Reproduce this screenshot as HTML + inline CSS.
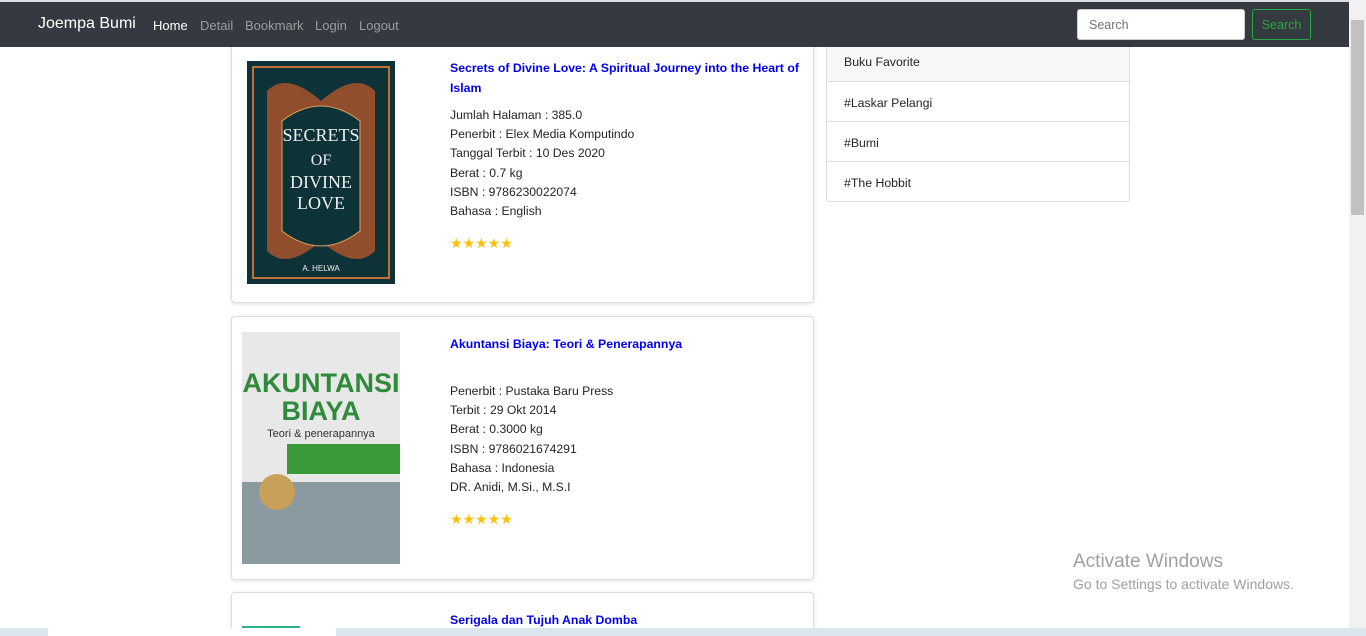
<!DOCTYPE html>
<html><head><style>
*{box-sizing:border-box;margin:0;padding:0}
html,body{width:1366px;height:636px;overflow:hidden}
body{background:#fff;font-family:"Liberation Sans",sans-serif;position:relative;font-size:13px;color:#212529}
.top{position:absolute;left:0;top:0;width:1366px;height:2px;background:#ddd;z-index:5}
nav{position:absolute;left:0;top:2px;width:1349px;height:45px;background:#343a40;z-index:5}
.brand{position:absolute;left:38px;top:13px;color:#fff;font-size:16px}
.nl{position:absolute;top:16px;font-size:13px;color:#9a9da0}
.srch{position:absolute;left:1077px;top:7px;width:168px;height:31px;background:#fff;border-radius:3px;border:1px solid #ccc;padding:8px 11px;color:#6c757d;font-size:12.5px}
.sbtn{position:absolute;left:1252px;top:7px;width:59px;height:31px;border:1px solid #28a745;border-radius:3px;color:#28a745;font-size:12.5px;padding:8px 0;text-align:center}
.card{position:absolute;left:231px;width:583px;border:1px solid #ddd;border-radius:4px;box-shadow:0 1px 4px rgba(0,0,0,.12);background:#fff}
.t{position:absolute;left:218px;color:#0000ee;font-weight:bold;font-size:12.3px;line-height:20px;width:350px}
.info{position:absolute;left:218px;line-height:19.2px;font-size:12.2px}
.stars{position:absolute;left:218px;color:#ffc107;font-size:14px;letter-spacing:0px}
.list{position:absolute;left:826px;top:40px;width:304px;border:1px solid #ddd;border-radius:0 0 4px 4px;font-size:12.3px}
.list div{height:40px;border-top:1px solid #ddd;padding:14px 17px 0}
.list div:first-child{background:#f7f7f7;border-top:none;height:40px;padding-top:14px}
.scroll{position:absolute;left:1349px;top:0;width:17px;height:628px;background:#f1f1f1;z-index:6}
.thumb{position:absolute;left:1351px;top:20px;width:13px;height:195px;background:#c1c1c1;z-index:7}
.task{position:absolute;left:0;top:628px;width:1366px;height:8px;background:#dbe6ee;z-index:8}
.wm{position:absolute;left:1073px;color:#a0a0a0;z-index:4}
</style></head><body>
<div class="top"></div>
<nav>
<div class="brand">Joempa Bumi</div>
<div class="nl" style="left:153px;color:#fff">Home</div>
<div class="nl" style="left:200px">Detail</div>
<div class="nl" style="left:245px">Bookmark</div>
<div class="nl" style="left:315px">Login</div>
<div class="nl" style="left:359px">Logout</div>
<div class="srch">Search</div>
<div class="sbtn">Search</div>
</nav>
<div class="card" style="top:36px;height:267px">
<svg style="position:absolute;left:15px;top:24px" width="148" height="223"><rect width="148" height="223" fill="#0d3338"/><rect x="6" y="6" width="136" height="211" fill="none" stroke="#c0703a" stroke-width="2"/><path d="M20 30 Q40 10 74 40 Q108 10 128 30 L128 190 Q108 210 74 180 Q40 210 20 190Z" fill="#c95a2a" opacity=".7"/><path d="M35 60 Q74 30 113 60 L113 170 Q74 200 35 170Z" fill="#0d3338" stroke="#e0a060"/><text x="74" y="80" fill="#eee" font-size="18" text-anchor="middle" font-family="Liberation Serif">SECRETS</text><text x="74" y="104" fill="#eee" font-size="16" text-anchor="middle" font-family="Liberation Serif">OF</text><text x="74" y="127" fill="#eee" font-size="18" text-anchor="middle" font-family="Liberation Serif">DIVINE</text><text x="74" y="148" fill="#eee" font-size="18" text-anchor="middle" font-family="Liberation Serif">LOVE</text><text x="74" y="210" fill="#eee" font-size="8" text-anchor="middle">A. HELWA</text></svg>
<div class="t" style="top:21px">Secrets of Divine Love: A Spiritual Journey into the Heart of Islam</div>
<div class="info" style="top:69px">Jumlah Halaman : 385.0<br>Penerbit : Elex Media Komputindo<br>Tanggal Terbit : 10 Des 2020<br>Berat : 0.7 kg<br>ISBN : 9786230022074<br>Bahasa : English</div>
<div class="stars" style="top:198px">★★★★★</div>
</div>
<div class="card" style="top:316px;height:264px">
<svg style="position:absolute;left:10px;top:15px" width="158" height="232"><rect width="158" height="232" fill="#e8e8e8"/><text x="79" y="60" fill="#2e8b3a" font-size="27" font-weight="bold" text-anchor="middle">AKUNTANSI</text><text x="79" y="88" fill="#2e8b3a" font-size="27" font-weight="bold" text-anchor="middle">BIAYA</text><text x="79" y="105" fill="#333" font-size="11" text-anchor="middle">Teori &amp; penerapannya</text><rect x="45" y="112" width="113" height="30" fill="#3a9a3a"/><rect x="0" y="150" width="158" height="82" fill="#8a9aa0"/><circle cx="35" cy="160" r="18" fill="#c9a05a"/></svg>
<div class="t" style="top:17px">Akuntansi Biaya: Teori &amp; Penerapannya</div>
<div class="info" style="top:65px">Penerbit : Pustaka Baru Press<br>Terbit : 29 Okt 2014<br>Berat : 0.3000 kg<br>ISBN : 9786021674291<br>Bahasa : Indonesia<br>DR. Anidi, M.Si., M.S.I</div>
<div class="stars" style="top:194px">★★★★★</div>
</div>
<div class="card" style="top:592px;height:60px">
<div style="position:absolute;left:10px;top:33px;width:58px;height:3px;background:#2ab08a"></div>
<div class="t" style="top:17px">Serigala dan Tujuh Anak Domba</div>
</div>
<div class="list"><div>Buku Favorite</div><div>#Laskar Pelangi</div><div>#Bumi</div><div>#The Hobbit</div></div>
<div class="wm" style="top:551px;font-size:19px">Activate Windows</div>
<div class="wm" style="top:576px;font-size:14px">Go to Settings to activate Windows.</div>
<div class="scroll"></div><div class="thumb"></div>
<div class="task"><div style="position:absolute;left:48px;top:0;width:288px;height:8px;background:#fff"></div></div>
</body></html>
